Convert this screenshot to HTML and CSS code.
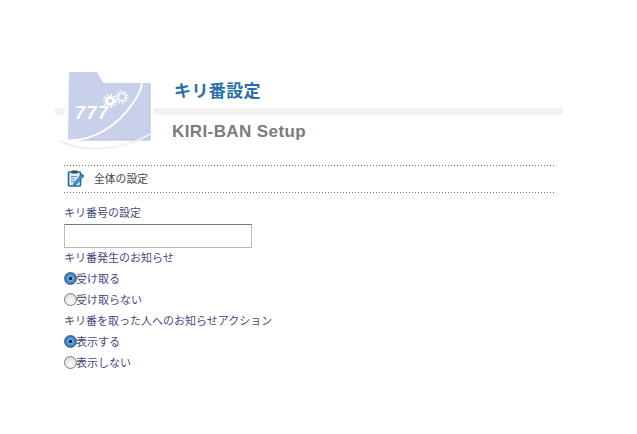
FILE: index.html
```html
<!DOCTYPE html>
<html lang="ja">
<head>
<meta charset="utf-8">
<title>KIRI-BAN Setup</title>
<link rel="stylesheet" href="styles.css">
</head>
<body>
<header class="header">
  <div class="header-bar"></div>
  <svg class="folder" width="98" height="92" viewBox="0 0 98 92" aria-hidden="true">
    <rect x="10" y="38" width="88" height="16" fill="#fff"/>
    <path d="M14 8 Q14 7 16 7 L42 7 L47 16 Q48 18 50 18 L95 18 L95 75 L13 75 Z" fill="#c9d1ea"/>
    <path d="M14 75 H95 V18" fill="none" stroke="#b4bcdc" stroke-width="1"/>
    <path d="M5 76 C28 88 68 86 97 68" fill="none" stroke="#eef0f8" stroke-width="2"/>
    <path d="M12 75 C36 77 62 62 78 38 C88 24 90 13 82 8 C74 4 62 5 50 11" fill="none" stroke="#fff" stroke-width="2"/>
    <text class="folder-num" x="20" y="54">777</text>
    <g fill="none" stroke="#fff">
      <circle cx="55" cy="36" r="3.500" stroke-width="3"/>
      <circle cx="55" cy="36" r="6.200" stroke-width="1.600" stroke-dasharray="1.800 1.800"/>
      <circle cx="67" cy="32" r="3.800" stroke-width="1.600"/>
      <circle cx="67" cy="32" r="5.800" stroke-width="1.500" stroke-dasharray="1.800 1.800"/>
    </g>
  </svg>
  <div class="titles">
    <h1 class="title-ja">キリ番設定</h1>
    <p class="title-en">KIRI-BAN Setup</p>
  </div>
</header>

<main class="content">
  <div class="section-head">
    <svg class="memo" width="18" height="18" viewBox="0 0 18 18" aria-hidden="true">
      <rect x="1.500" y="3" width="12" height="14" rx="1" fill="#d9ecf7" stroke="#1f6a9c" stroke-width="1.600"/>
      <rect x="4.500" y="1.500" width="6" height="3" fill="#3f4a55"/>
      <path d="M4 7.500 H10 M4 10 H8 M4 12.500 H7" stroke="#6b8ca5" stroke-width="1"/>
      <path d="M7 14 L15 5 L17 7 L9 15.500 L6.500 16 Z" fill="#3d9ad1" stroke="#0f5c8f" stroke-width="0.800"/>
    </svg>
    <span>全体の設定</span>
  </div>

  <form class="form">
    <label class="line" for="kiri">キリ番号の設定</label>
    <input class="text-input" id="kiri" type="text">
    <div class="line">キリ番発生のお知らせ</div>
    <label class="line"><input class="radio" type="radio" name="notice" checked>受け取る</label>
    <label class="line"><input class="radio" type="radio" name="notice">受け取らない</label>
    <div class="line">キリ番を取った人へのお知らせアクション</div>
    <label class="line"><input class="radio" type="radio" name="action" checked>表示する</label>
    <label class="line"><input class="radio" type="radio" name="action">表示しない</label>
  </form>
</main>
</body>
</html>
```
FILE: styles.css
```css
html, body {
  margin: 0;
  padding: 0;
  background: #fff;
}
body {
  font-family: "Noto Sans CJK JP", "Liberation Sans", sans-serif;
  color: #3f4b7c;
}
.header {
  position: relative;
  box-sizing: border-box;
  width: 508px;
  height: 92px;
  margin: 65px 0 0 55px;
  display: flex;
}
.header-bar {
  position: absolute;
  left: 0;
  right: 0;
  top: 43px;
  height: 7px;
  background: #f2f2f2;
}
.folder {
  position: relative;
  flex: none;
}
.folder-num {
  font-family: "Liberation Sans", sans-serif;
  font-size: 18px;
  font-style: italic;
  font-weight: 700;
  letter-spacing: 1.500px;
  fill: #fff;
}
.titles {
  position: relative;
  margin-left: 17px;
}
.title-ja {
  margin: 13px 0 0 4px;
  font-size: 17px;
  line-height: 24px;
  font-weight: 700;
  letter-spacing: 0.4px;
  color: #2b70a8;
}
.title-en {
  margin: 19px 0 0 2px;
  font-family: "Liberation Sans", sans-serif;
  font-size: 17px;
  line-height: 22px;
  font-weight: 700;
  letter-spacing: 0.4px;
  color: #7c7c7c;
}
.content {
  width: 491px;
  margin: 8px 0 0 64px;
}
.section-head {
  box-sizing: border-box;
  height: 28px;
  display: flex;
  align-items: center;
  gap: 9px;
  padding: 0 0 3px 3px;
  background-image:
    linear-gradient(to right, #707070 1px, transparent 1px),
    linear-gradient(to right, #707070 1px, transparent 1px);
  background-size: 3px 1px, 3px 1px;
  background-position: left top, left bottom;
  background-repeat: repeat-x, repeat-x;
  font-size: 10.800px;
  color: #444;
}
.form {
  display: flex;
  flex-direction: column;
  align-items: flex-start;
  margin-top: 9px;
}
.line {
  display: flex;
  align-items: center;
  height: 21px;
  font-size: 11px;
  line-height: 21px;
}
.text-input {
  box-sizing: border-box;
  width: 188px;
  height: 24px;
  margin: 1px 0 -1px;
  padding: 0;
  border: 1px solid #b9b9b9;
  border-top-color: #777;
  background: #fff;
}
.radio {
  appearance: none;
  -webkit-appearance: none;
  box-sizing: border-box;
  flex: none;
  width: 13px;
  height: 13px;
  margin: 0 -1px 0 0;
  border: 1px solid #7d7d7d;
  border-radius: 50%;
  background: radial-gradient(circle at 50% 70%, #fff 0, #e4e4e4 60%, #c9c9c9 100%);
}
.radio:checked {
  border-color: #3f5f85;
  background: radial-gradient(circle at 50% 50%, #10253f 0, #10253f 17%, #6fa8dc 24%, #2f78c2 70%, #3c6fa5 100%);
}
```
